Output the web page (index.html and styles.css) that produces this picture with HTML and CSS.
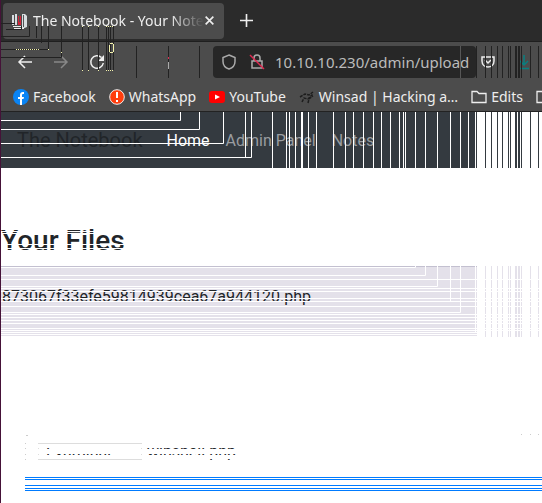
FILE: index.html
```html
<!DOCTYPE html>
<html lang="en">
<head>
<meta charset="utf-8">
<title>The Notebook - Your Note</title>
<link rel="stylesheet" href="styles.css">
</head>
<body>
<header class="browser">
  <div class="tabs">
    <div class="tab">
      <svg class="favicon" viewBox="0 0 16 16"><path fill="#d8dde0" d="M1 2h2v10H1zM4 1h2v11H4zM11 1h3l2 2v11l-5 2z"/><path fill="#d32338" d="M7 3h3v9H7z"/><path stroke="#eee" d="M2 13.500h10M3 15.500h10"/><path stroke="#555" d="M12.500 2v12M8.500 2v7"/></svg>
      <span class="tab-title">The Notebook - Your Note</span>
      <button class="icon-btn close" aria-label="Close tab"><svg viewBox="0 0 10 10"><path d="M1.500 1.500l7 7m0-7l-7 7"/></svg></button>
    </div>
    <button class="icon-btn add" aria-label="New tab"><svg viewBox="0 0 12 12"><path d="M6 0v12M0 6h12"/></svg></button>
  </div>
  <div class="toolbar">
    <button class="icon-btn" aria-label="Back"><svg viewBox="0 0 16 16"><path d="M15 8H2m6-6L2 8l6 6"/></svg></button>
    <button class="icon-btn dim" aria-label="Forward"><svg viewBox="0 0 16 16"><path d="M1 8h13M8 2l6 6-6 6"/></svg></button>
    <button class="icon-btn reload" aria-label="Reload"><svg viewBox="0 0 16 16"><path d="M12.500 3.500A6.300 6.300 0 1 0 14.300 9"/><path d="M15 1v6H9z" fill="#eee" stroke="none"/></svg></button>
    <div class="address">
      <svg class="icon muted" viewBox="0 0 16 16"><path d="M8 1l6 2.500v4c0 4-3 6.500-6 7.500-3-1-6-3.500-6-7.500v-4z"/></svg>
      <svg class="icon muted" viewBox="0 0 16 16"><path d="M3 7h10v7H3zM5 7V4a3 3 0 0 1 6 0v3"/><path d="M1 1l14 14" stroke="#e22850"/></svg>
      <input class="url" aria-label="Address" value="10.10.10.230/admin/upload">
    </div>
    <button class="icon-btn pocket" aria-label="Save"><svg viewBox="0 0 16 16"><path d="M2 3h12v4c0 8-12 8-12 0zM5 6l3 3 3-3"/></svg></button>
    <button class="icon-btn download" aria-label="Downloads"><svg viewBox="0 0 16 16"><path d="M8 1v10M4 7l4 4 4-4M3 14.500h10"/></svg></button>
  </div>
  <nav class="bookmarks" aria-label="Bookmarks">
    <a href="#"><svg viewBox="0 0 16 16"><circle cx="8" cy="8" r="8" fill="#0a84f4"/><path fill="#fff" d="M7 16v-6H5V8h2V6q0-3 3-3h1v2h-1q-1 0-1 1v2h2l-.5 2H9v6z"/></svg>Facebook</a>
    <a href="#"><svg viewBox="0 0 16 16"><circle cx="8" cy="8" r="7.300" fill="#ff3d0d" stroke="#eee"/><path fill="#fff" d="M7 3h2v6H7zM7 11h2v2H7z"/></svg>WhatsApp</a>
    <a href="#"><svg viewBox="0 0 16 16"><rect y="2" width="16" height="12" rx="3" fill="#f00"/><path fill="#fff" d="M6 5.500v5L11 8z"/></svg>YouTube</a>
    <a href="#"><svg viewBox="0 0 16 16"><path stroke="#1d1d1d" stroke-width="1.500" fill="none" stroke-dasharray="3 1" d="M1 8l5-3 4 1 4-3M3 13l2-4 4 1 5-5M9 14l1-4 4-3"/></svg>Winsad | Hacking a…</a>
    <a href="#" class="folder"><svg viewBox="0 0 16 16"><path d="M1 2.500h5l2 2h7v9H1z"/></svg>Edits</a>
    <a href="#" class="folder" aria-label="Folder"><svg viewBox="0 0 16 16"><path d="M1 2.500h5l2 2h7v9H1z"/></svg></a>
  </nav>
  <svg class="lines" width="542" height="112" aria-hidden="true">
    <path stroke="#222" d="M1 23.500h14M6 29.500h15.500V26M1 36.500h28.500V26M1 49.500h47.500V26M1 57.500h60.500V26M36.500 26v12M41.500 26v17M82.500 26v44M88.500 26v44M98.500 26v44M106.500 26v44M108.500 26v44M110.500 26v44M113.500 26v44M136.500 46v32M168.500 46v32M199.500 46v32M485.500 46v32M491.500 46v32M497.500 46v32M502.500 46v32M508.500 46v32M510.500 46v32M515.500 46v32M516.500 46v32M518.500 46v32M519.500 46v32M521.500 46v32M530.500 46v32M538.500 46v32M476.500 46v32"/>
    <path stroke="#575757" d="M460.500 46v32"/>
    <path stroke="#f4f3ae" stroke-dasharray="1 1" d="M16 49.500h24M106 70.500h8M106 26.500h8"/>
    <path stroke="#f4f3ae" d="M82 26.500h1M88 26.500h1M98 26.500h1M82 70.500h1M88 70.500h1M98 70.500h1M48 49.500h1M61 52.500h1M109.500 45v7M113.500 44v8M110 43.500h3M110 52.500h3"/>
    <path stroke="#e22850" d="M168.500 57v2"/>
    <path stroke="#aaa" d="M168.500 62v7"/>
  </svg>
</header>
<main>
  <nav class="site-nav">
    <a class="brand" href="#">The Notebook</a>
    <a class="active" href="#">Home</a>
    <a href="#">Admin Panel</a>
    <a href="#">Notes</a>
    <svg class="lines" width="542" height="56" aria-hidden="true">
      <path fill="#fff" d="M477 0h65v56h-65z"/>
      <path stroke="#fff" d="M0 8.500h180.500V0M0 17.500h199.500V0M0 31.500h223.500V0M0 45.500h251.500V0M245.500 0v45M272.500 0v56M286.500 0v56M289.500 0v56M295.500 0v56M301.500 0v56M302.500 0v56M308.500 0v56M316.500 0v56M333.500 0v56M345.500 0v56M353.500 0v56M363.500 0v56M373.500 0v56M381.500 0v56M390.500 0v56M399.500 0v56M403.500 0v56M405.500 0v56M415.500 0v56M425.500 0v56M437.500 0v56M450.500 0v56M460.500 0v56M468.500 0v56M475.500 0v56"/>
      <path stroke="#343a40" d="M485.500 0v56M491.500 0v56M497.500 0v56M502.500 0v56M508.500 0v56M510.500 0v56M515.500 0v56M516.500 0v56M518.500 0v56M519.500 0v56M521.500 0v56M530.500 0v56M538.500 0v56"/>
    </svg>
  </nav>
  <section class="files">
    <h1>Your Files</h1>
    <svg class="lines" width="140" height="40" aria-hidden="true"><path stroke="#fff" d="M1 7.500h140M1 9.500h140M1 20.500h140M1 24.500h140"/></svg>
  </section>
  <div class="table-wrap">
    <table><tbody><tr><td>873067f33efe59814939cea67a944120.php</td></tr></tbody></table>
    <svg class="lines" width="542" height="72" aria-hidden="true">
      <path fill="#fff" d="M477 0h65v72h-65z"/>
      <path stroke="#e4e1ea" d="M485.500 0v71M491.500 0v71M497.500 0v71M502.500 0v71M508.500 0v71M510.500 0v71M515.500 0v71M516.500 0v71M518.500 0v71M519.500 0v71M521.500 0v71M530.500 0v71M538.500 0v71"/>
      <path stroke="#fff" d="M1 1.500h414.500V0M1 9.500h424.500V0M1 13.500h541M1 20.500h436.500V0M1 22.500h541M1 25.500h541M1 32.500h541M1 35.500h541M450.500 0v35M1 40.500h541M1 46.500h459.500V0M1 48.500h541M1 51.500h541M1 54.500h541M1 57.500h541M1 62.500h541M1 64.500h541M1 66.500h477M1 68.500h477M475.500 0v66M1 70.500h477"/>
    </svg>
  </div>
  <form class="upload">
    <label class="picker"><span class="examine">Examinar...</span><span>winshell.php</span><input type="file">
      <svg class="lines" width="220" height="20" aria-hidden="true"><path fill="#fff" d="M0 1h220v4H0zM0 6h220v5H0zM0 12h220v4H0zM0 17h220v3H0z"/></svg>
    </label>
    <button type="submit" class="save" aria-label="Save"></button>
    <svg class="lines" width="542" height="130" aria-hidden="true"><path stroke="#ccc" d="M26 98.500h2M25 106.500h1M25 111.500h1M25 117.500h1M25 122.500h1M521 97.500h1M530 97.500h1M538 97.500h1"/></svg>
  </form>
</main>
</body>
</html>
```
FILE: styles.css
```css
* { box-sizing: border-box; }
body { margin: 0; min-height: 100vh; border-left: 1px solid #451238; background: #fff; font: 16px Roboto, sans-serif; color: #212529; overflow: hidden; }
button { font: inherit; }
svg { flex: none; }
.lines { position: absolute; top: 0; left: -1px; pointer-events: none; fill: none; }
.browser { position: relative; height: 112px; background: #4c4c4c; border-bottom: 1px solid #222; color: #eee; font: 14px "Noto Sans", sans-serif; overflow: hidden; }
.tabs { display: flex; align-items: center; height: 42px; padding: 2px; background: #2b2b2b; border-bottom: 1px solid #1f1f1f; }
.tab { display: flex; align-items: center; width: 221px; height: 36px; padding: 0 10px 0 8px; background: #4c4c4c; border-radius: 4px; }
.favicon { width: 16px; height: 16px; margin-right: 6px; }
.tab-title { flex: 1; white-space: nowrap; mask-image: linear-gradient(to right, #000 80%, transparent); }
.icon-btn { flex: none; border: 0; padding: 0; background: none; width: 16px; height: 16px; }
.icon-btn svg, .icon { display: block; width: 16px; height: 16px; fill: none; stroke: #eee; stroke-width: 1.5; }
.icon-btn.close, .icon-btn.close svg { width: 11px; height: 11px; }
.icon-btn.add, .icon-btn.add svg { width: 13px; height: 13px; }
.icon-btn.add { margin-left: 16px; }
.toolbar { display: flex; align-items: center; height: 40px; padding-left: 16px; gap: 20px; }
.icon-btn.dim svg { stroke: #888; }
.address { display: flex; align-items: center; gap: 12px; width: 263px; height: 32px; margin-left: 88px; padding-left: 8px; background: #272727; border-radius: 4px; }
.icon.muted { stroke: #aaa; }
.url { flex: 1; min-width: 0; height: 24px; border: 0; padding: 0; background: none; color: #bbb; font: 15px "Noto Sans", sans-serif; margin-left: -2px; }
.icon-btn.pocket { margin-left: -16px; }
.icon-btn.download svg { stroke: #087f80; }
.bookmarks { display: flex; align-items: center; height: 29px; gap: 13px; padding-left: 12px; white-space: nowrap; }
.bookmarks a { display: flex; align-items: center; gap: 4px; color: #eee; text-decoration: none; }
.bookmarks svg { width: 16px; height: 16px; }
.folder svg { fill: none; stroke: #eee; stroke-width: 1.3; }
.site-nav { position: relative; display: flex; align-items: center; height: 56px; padding-left: 16px; gap: 16px; background: #343a40; overflow: hidden; white-space: nowrap; }
.site-nav a { color: #9a9da0; text-decoration: none; }
.site-nav .brand { font-size: 20px; color: #212529; margin-right: 8px; }
.site-nav .active { color: #fff; }
.files { position: relative; height: 98px; padding-top: 56px; }
.files .lines { top: 56px; }
.files h1 { margin: 0; font-size: 28px; line-height: 34px; font-weight: 500; }
.table-wrap { position: relative; height: 71px; }
table { width: 100%; height: 71px; border-collapse: collapse; background: #e4e1ea; border-top: 1px solid #c3c0d0; }
td { padding: 0 1px 12px; }
.upload { position: relative; padding: 106px 0 0 24px; }
.picker { position: relative; display: flex; align-items: center; gap: 5px; height: 17px; margin-left: 13px; font-size: 16px; }
.picker input { display: none; }
.examine { width: 104px; height: 17px; line-height: 17px; padding-left: 7px; border: 1px solid #ddd; }
.save {
  display: block; width: 100%; height: 14px; margin-top: 17px; padding: 0; border: 0;
  background: linear-gradient(#007bff 0 1px, #fff 1px 2px, #007bff 2px 3px, #fff 3px 8px, #007bff 8px 9px, #fff 9px 11px, #007bff 11px 12px, #fff 12px 13px, #007bff 13px);
}
```
